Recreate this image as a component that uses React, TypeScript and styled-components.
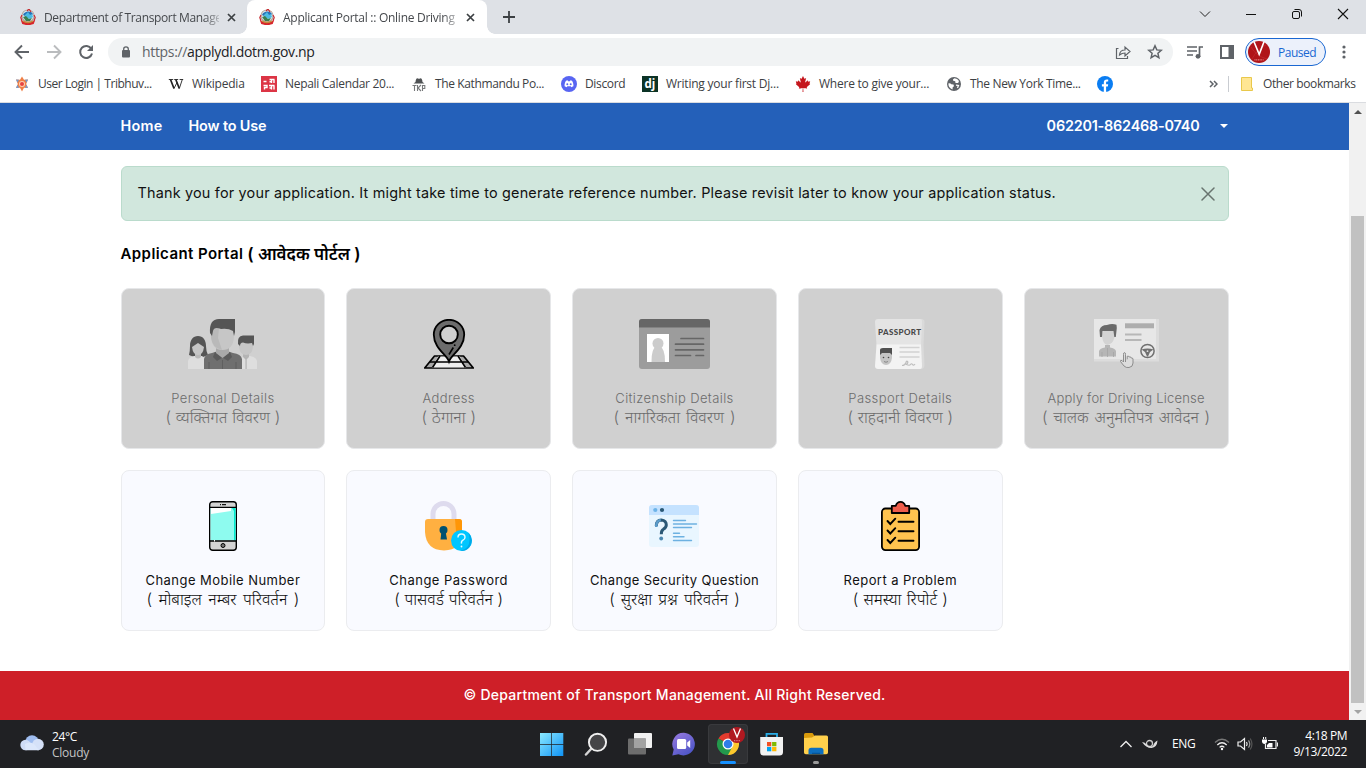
import React from "react";
import styled, { createGlobalStyle } from "styled-components";
import { FaCanadianMapleLeaf } from "react-icons/fa";

const ui = `"Segoe UI", "Open Sans", "Noto Sans", sans-serif`;
const web = `Inter, "Noto Sans", "Noto Sans Devanagari", sans-serif`;

const GlobalStyle = createGlobalStyle`
  * { box-sizing: border-box; }
  body { margin: 0; background: #fff; overflow: hidden; }
  svg { display: block; flex: none; }
`;

const Screen = styled.div`
  width: 1366px;
  height: 768px;
  display: flex;
  flex-direction: column;
  overflow: hidden;
`;

/* Text with its tracking and word gap in px */
const Txt = styled.span<{ $ls?: number; $size?: number; $ws?: number }>`
  white-space: nowrap;
  letter-spacing: ${(p) => p.$ls ?? 0}px;
  word-spacing: ${(p) => p.$ws ?? 0}px;
  ${(p) => (p.$size ? `font-size: ${p.$size}px;` : "")}
`;

/* ---------- Browser chrome ---------- */
const TabStrip = styled.div`
  height: 34px;
  flex: none;
  display: flex;
  background: #dee1e6;
  font: 12px ${ui};
  color: #45484c;
`;
const Tab = styled.div<{ $active?: boolean }>`
  position: relative;
  width: ${(p) => (p.$active ? 240 : 247)}px;
  padding-left: ${(p) => (p.$active ? 12 : 20)}px;
  display: flex;
  align-items: center;
  background: ${(p) => (p.$active ? "#fff" : "transparent")};
  border-radius: 8px 8px 0 0;
  &::before, &::after {
    content: "";
    display: ${(p) => (p.$active ? "block" : "none")};
    position: absolute;
    bottom: 0;
    width: 8px;
    height: 8px;
  }
  &::before { left: -8px; background: radial-gradient(circle at 0 0, transparent 7.5px, #fff 8px); }
  &::after { right: -8px; background: radial-gradient(circle at 100% 0, transparent 7.5px, #fff 8px); }
`;
const TabTitle = styled.div`
  width: 175px;
  margin-left: 8px;
  white-space: nowrap;
  mask-image: linear-gradient(90deg, #000 160px, rgba(0, 0, 0, 0.25) 175px);
`;
const TabClose = styled.div`
  margin-left: 8px;
`;
const NewTab = styled.div`
  padding: 11px 0 0 16px;
`;
const WindowButtons = styled.div`
  margin-left: auto;
  display: flex;
  gap: 34px;
  padding: 8px 17px 0 0;
`;
const Toolbar = styled.div`
  height: 36px;
  flex: none;
  display: flex;
  align-items: center;
  padding-left: 14px;
  background: #fff;
`;
const NavIcons = styled.div`
  width: 94px;
  display: flex;
  gap: 16px;
`;
const AddressBar = styled.div`
  width: 1065px;
  height: 28px;
  border-radius: 14px;
  background: #f1f3f4;
  display: flex;
  align-items: center;
  padding: 0 10px 0 12px;
  font: 14px ${ui};
  color: #202124;
`;
const Url = styled.div`
  margin-left: 10px;
  flex: 1;
  line-height: 20px;
  & i { font-style: normal; color: #5f6368; }
`;
const AddressIcons = styled.div`
  display: flex;
  gap: 16px;
`;
const ToolIcons = styled.div`
  display: flex;
  align-items: center;
  gap: 16px;
  margin-left: 14px;
`;
const Profile = styled.div`
  width: 81px;
  height: 28px;
  margin-left: 10px;
  border: 1px solid #1967d2;
  border-radius: 14px;
  background: #ecf1fb;
  display: flex;
  align-items: center;
  padding-left: 2px;
  gap: 8px;
  font: 12px ${ui};
  color: #1967d2;
`;
const Menu = styled.div`
  margin-left: 16px;
`;
const Bookmarks = styled.div`
  height: 33px;
  flex: none;
  display: flex;
  align-items: center;
  padding: 0 0 5px 14px;
  background: #fff;
  border-bottom: 1px solid #dadce0;
  font: 12px ${ui};
  color: #3c4043;
`;
const Bookmark = styled.div<{ $w: number }>`
  width: ${(p) => p.$w}px;
  display: flex;
  align-items: center;
  gap: 8px;
`;
const Other = styled.div`
  margin-left: auto;
  display: flex;
  align-items: center;
`;
const Divider = styled.div`
  width: 1px;
  height: 16px;
  margin: 0 11px 0 10px;
  background: #c9ccd1;
`;

/* ---------- Web page ---------- */
const Viewport = styled.div`
  height: 617px;
  flex: none;
  display: flex;
`;
const Page = styled.div`
  width: 1349px;
  display: flex;
  flex-direction: column;
  background: #fff;
  font-family: ${web};
  color: #111;
`;
const Container = styled.div`
  width: 1108px;
  margin: 0 auto;
`;
const NavBar = styled.div`
  height: 47px;
  flex: none;
  background: #2460b9;
  color: #fff;
  font-size: 14.4px;
  font-weight: 600;
`;
const NavRow = styled(Container)`
  height: 47px;
  display: flex;
  align-items: center;
  padding-bottom: 2px;
`;
const NavLink = styled.div<{ $w: number }>`
  width: ${(p) => p.$w}px;
`;
const Account = styled.div`
  margin-left: auto;
  display: flex;
  align-items: center;
  gap: 20px;
  padding-right: 1px;
`;
const Caret = styled.div`
  border: 4px solid transparent;
  border-top-color: #fff;
  border-bottom: 0;
`;
const Alert = styled.div`
  height: 55px;
  margin-top: 16px;
  padding: 0 13px 0 16px;
  display: flex;
  align-items: center;
  justify-content: space-between;
  background: #d1e7dd;
  border: 1px solid #badbcc;
  border-radius: 6px;
  font-size: 14.4px;
  & ${Txt} { padding-bottom: 2px; }
`;
const Heading = styled.div`
  height: 24px;
  margin-top: 20px;
  margin-bottom: 1px;
  display: flex;
  align-items: center;
  gap: 4px;
  font-size: 15px;
  font-weight: 600;
  color: #000;
`;
const Grid = styled.div`
  margin-top: 23px;
  display: grid;
  grid-template-columns: repeat(5, 1fr);
  grid-auto-rows: 161px;
  gap: 21px;
`;
const Card = styled.div<{ $off?: boolean }>`
  display: flex;
  flex-direction: column;
  align-items: center;
  padding-top: 29.5px;
  border: 1px solid ${(p) => (p.$off ? "#e6e7e9" : "#ebecef")};
  border-radius: 8px;
  background: ${(p) => (p.$off ? "#d0d0d0" : "#f9faff")};
  color: ${(p) => (p.$off ? "#6c6c6c" : "#111")};
  font-size: 13px;
  font-weight: ${(p) => (p.$off ? 350 : 400)};
`;
const CardName = styled.div`
  margin-top: 20px;
  height: 19px;
  line-height: 19px;
`;
const CardSub = styled.div`
  height: 18px;
  line-height: 18px;
  font-weight: 300;
`;
const Footer = styled.div`
  height: 49px;
  margin-top: auto;
  padding-bottom: 2px;
  flex: none;
  background: #ce1f28;
  color: #fff;
  display: flex;
  align-items: center;
  justify-content: center;
  font-size: 14px;
  font-weight: 500;
`;
const ScrollBar = styled.div`
  width: 17px;
  background: #f1f1f1;
  display: flex;
  flex-direction: column;
  align-items: center;
`;
const ScrollArrow = styled.div<{ $down?: boolean }>`
  height: 17px;
  display: flex;
  align-items: center;
  color: ${(p) => (p.$down ? "#a3a3a3" : "#505050")};
`;
const ScrollThumb = styled.div`
  width: 13px;
  height: 487px;
  margin-top: 96px;
  background: #c1c1c1;
`;

/* ---------- Taskbar ---------- */
const Taskbar = styled.div`
  height: 48px;
  flex: none;
  display: flex;
  justify-content: space-between;
  background: #202124;
  color: #fff;
  font: 12px/16px ${ui};
`;
const Weather = styled.div`
  width: 532px;
  display: flex;
  align-items: center;
  padding-left: 20px;
  gap: 8px;
`;
const WeatherText = styled.div`
  padding-top: 2px;
  & div:last-child { color: #c4c4c4; }
`;
const Apps = styled.div`
  flex: 1;
  display: flex;
`;
const AppSlot = styled.div<{ $active?: boolean }>`
  width: 40px;
  height: 40px;
  margin: 4px 4px 0 0;
  display: flex;
  flex-direction: column;
  align-items: center;
  padding-top: 8px;
  border-radius: 4px;
  background: ${(p) => (p.$active ? "#2f3033" : "transparent")};
  box-shadow: ${(p) => (p.$active ? "inset 0 0 0 1px #393a3d" : "none")};
`;
const RunMark = styled.div<{ $active?: boolean }>`
  width: ${(p) => (p.$active ? 16 : 6)}px;
  height: 3px;
  margin-top: 5px;
  border-radius: 2px;
  background: ${(p) => (p.$active ? "#1590ff" : "#9a9a9a")};
`;
const Tray = styled.div`
  display: flex;
  align-items: center;
  padding-right: 19px;
`;
const TrayItem = styled.div<{ $w: number }>`
  width: ${(p) => p.$w}px;
`;
const Clock = styled.div`
  width: 65px;
  text-align: right;
`;

/* ---------- Small icons ---------- */
const Crest = () => (
  <svg width="16" height="16" viewBox="0 0 16 16">
    <circle cx="8" cy="7" r="6.6" fill="#b5a79d" />
    <circle cx="8" cy="6.7" r="5.5" fill="#dde9ee" />
    <path d="M3 6c1-4 8-5 10-1l-2 2-3-2-3 2z" fill="#2773b7" />
    <path d="M5 6l3-3 2 3 2-1 1 3-3 2-5-2z" fill="#4cbbe4" />
    <path d="M3 8l3-1 3 3 3-1-2 3H6z" fill="#39804e" />
    <path d="M7 2l2-2 2 3M2 6L.8 8.5 2 12M14 6l1.2 2.5L14 12" fill="none" stroke="#c62c32" strokeWidth="1.2" />
    <path d="M.8 11q7 5 14.4 0l-1.5 4Q8 17.3 2.2 15z" fill="#d7262b" />
    <path d="M3 12q5 3 10 0" fill="none" stroke="#c48a3a" strokeWidth="1.4" />
  </svg>
);
const CloseIcon = () => (
  <svg width="9" height="9" viewBox="0 0 9 9">
    <path d="M1 1l7 7M8 1L1 8" stroke="#3c4043" strokeWidth="1.7" />
  </svg>
);
const Avatar = () => (
  <svg width="22" height="22" viewBox="0 0 22 22">
    <circle cx="11" cy="11" r="11" fill="#b01419" />
    <path d="M3 6q5 9 16 12M18 4Q9 8 4 18" stroke="#c5343a" fill="none" opacity=".5" />
    <path d="M6 .8l5.200 12.500L16 .8" fill="none" stroke="#fff" strokeWidth="1.600" />
    <path d="M6.500 18.800h9" stroke="#e78a8d" strokeWidth="1.300" strokeDasharray="1 .7" />
  </svg>
);

const favicons: Record<string, React.ReactNode> = {
  user: (
    <svg width="16" height="16" viewBox="0 0 16 16">
      <path d="M8 .5l2 3.3 4-.3-1.8 4.5 1.8 4-4-.2-2 3.7-2-3.7-4 .2 1.8-4L2 3.500l4 .3z" fill="#f07f45" />
      <path d="M2 3.500l3 .2-1.500 3zM14 12l-3-.2 1.500-3zM2 12l3-.2-1.500-3zM14 3.500l-3 .2 1.500 3z" fill="#6f9bd1" />
      <circle cx="8" cy="8" r="3" fill="#fbd0b4" />
      <circle cx="8" cy="8" r="2" fill="#e8433f" />
    </svg>
  ),
  wiki: (
    <svg width="16" height="16" viewBox="0 0 16 16">
      <path d="M.8 3.500h4.400M6.200 3.500h4M11.600 3.500h3.600" stroke="#222" strokeWidth=".9" />
      <path d="M2.500 3.500L6 12.500M7.800 3.500l3.500 9" stroke="#222" strokeWidth="1.700" />
      <path d="M6 12.500l3-6M11.300 12.500l3-9" stroke="#222" strokeWidth=".9" />
    </svg>
  ),
  calendar: (
    <svg width="16" height="16" viewBox="0 0 16 16">
      <rect width="16" height="16" fill="#dc3545" />
      <path d="M2.500 5.500h3M8.500 3.500h5M10.500 3.500V7M13 3.500V7M8.500 5.700h2M2.500 9.500h3.500v2H3.500v2M8 9.500h5.500M10.500 9.500v4M13 9.500v4M8.500 12h2" stroke="#fff" strokeWidth="1.400" fill="none" />
    </svg>
  ),
  post: (
    <svg width="16" height="16" viewBox="0 0 16 16">
      <path d="M4.500 6Q5 1.500 7 2.500q1 .6 2 0 2-1 2.500 3.500l2 1.500h-11z" fill="#4f5254" />
      <path d="M1.500 9.500h4M3.500 9.500V15M6.500 9v6M10 9l-3 3 3 3M11.500 15V9.500h2.300v3h-2" stroke="#77797b" strokeWidth="1.100" fill="none" />
    </svg>
  ),
  discord: (
    <svg width="16" height="16" viewBox="0 0 16 16">
      <circle cx="8" cy="8" r="8" fill="#5865f2" />
      <path d="M5 4.800L6.600 4.300l.5.900h1.800l.5-.9 1.600.5c1.100 1.700 1.600 3.500 1.400 5.400l-2.100 1.100-.6-1.100H6.300l-.6 1.100-2.100-1.100c-.2-1.900.3-3.700 1.400-5.400z" fill="#fff" />
      <circle cx="6.300" cy="8.200" r="1" fill="#5865f2" />
      <circle cx="9.700" cy="8.200" r="1" fill="#5865f2" />
    </svg>
  ),
  django: (
    <svg width="16" height="16" viewBox="0 0 16 16">
      <rect width="16" height="16" fill="#0c3326" />
      <text x="8" y="12" textAnchor="middle" fontFamily="Open Sans, sans-serif" fontSize="11.500" fontWeight="700" fill="#fff">dj</text>
    </svg>
  ),
  maple: <FaCanadianMapleLeaf size={16} color="#c5161d" />,
  globe: (
    <svg width="16" height="16" viewBox="0 0 16 16">
      <circle cx="8" cy="8" r="7" fill="#5f6368" />
      <path d="M2.300 7.500q2-.5 3 .8l2.200.3.500 1.700-1.300 1-.2 2.300Q2.500 12 2.300 7.500z" fill="#fff" />
      <path d="M8.500 2.300q-2.300 1-1.300 2.400l2 .6.300 1.700h2.700l.8-2Q11.500 2.600 8.500 2.300z" fill="#fff" />
      <path d="M10 9.200l2.500.3-1 2.500" fill="none" stroke="#fff" strokeWidth="1.200" />
    </svg>
  ),
  facebook: (
    <svg width="16" height="16" viewBox="0 0 16 16">
      <circle cx="8" cy="8" r="8" fill="#0a7df2" />
      <path d="M6.800 16v-5.400H4.900V8.300h1.900V6.600c0-2 1.100-3.100 3-3.100.7 0 1.400.1 1.400.1v2h-.9c-.9 0-1.200.5-1.200 1.200v1.500h2.100l-.4 2.300H9.100V16z" fill="#fff" />
    </svg>
  ),
};

const bookmarks: { icon: string; label: string; w: number; ls: number }[] = [
  { icon: "user", label: "User Login | Tribhuv...", w: 154, ls: -0.47 },
  { icon: "wiki", label: "Wikipedia", w: 93, ls: -0.22 },
  { icon: "calendar", label: "Nepali Calendar 20...", w: 150, ls: -0.3 },
  { icon: "post", label: "The Kathmandu Po...", w: 150, ls: -0.38 },
  { icon: "discord", label: "Discord", w: 81, ls: -0.35 },
  { icon: "django", label: "Writing your first Dj...", w: 153, ls: -0.22 },
  { icon: "maple", label: "Where to give your...", w: 151, ls: -0.23 },
  { icon: "globe", label: "The New York Time...", w: 151, ls: -0.33 },
  { icon: "facebook", label: "", w: 16, ls: 0 },
];

/* ---------- Card pictures ---------- */
const People = () => (
  <svg width="69" height="50" viewBox="0 0 69 50">
    <path d="M1 36Q2 32 2 27c0-6 3-10 8-10s8 4 8 10q0 5 2 9l-5 2H6z" fill="#555" />
    <path d="M0 50V42q1-4 6-5h8l4 3v10z" fill="#dedede" />
    <path d="M7 32h6v6q-3 3-6 0z" fill="#b9b9b9" />
    <path d="M4 28l6-4 6 4q-1 8-6 8t-6-8z" fill="#c6c6c6" />
    <path d="M52 50V40l4-3h6q6 1 7 5v8z" fill="#dedede" />
    <path d="M55 33h6v5l-3 3-3-3z" fill="#b4b4b4" />
    <path d="M57.300 40h1.600v10h-1.600z" fill="#bdbdbd" />
    <path d="M51 23h14v5q-1 8-7 8t-7-8z" fill="#c6c6c6" />
    <path d="M50 25q-1-8 5-8.500h11V25l-1 2-1-3q-5 1-9-.5-3 0-3 3.500z" fill="#555" />
    <path d="M16 50V40q1-5 8-6l6-2h9l6 2q8 1 9 6v10z" fill="#6f6f6f" />
    <path d="M27 33l7.500 6 7.500-6 2 5-4 4-5.500-3.500L29 42l-4-4z" fill="#5b5b5b" />
    <path d="M21 43v7M48 43v7M34.500 41v9" stroke="#5f5f5f" />
    <path d="M28 27h13v7l-6.500 5-6.500-5z" fill="#a9a9a9" />
    <path d="M23 10h23v8q-1 13-11.500 13T23 18z" fill="#c6c6c6" />
    <path d="M23 9h8l-1 10 4 12Q24 29 23 18z" fill="#b9b9b9" />
    <path d="M22 14Q21 0 31 0h16v13l-1 4-1-5q-5-3-12-2-7-3-8 2l-1 5z" fill="#555" />
  </svg>
);
const MapPin = () => (
  <svg width="50" height="50" viewBox="0 0 50 50">
    <path d="M10.500 37h29L49.300 49H.7z" fill="#a8a8a8" stroke="#000" strokeWidth="1.700" strokeLinejoin="round" />
    <path d="M14 37.500h22L42 48.500H8z" fill="#eee" />
    <path d="M6 43h38M16 37L8.500 48.500M34 37l7.500 11.500" fill="none" stroke="#000" strokeWidth="1.600" />
    <path d="M25 42.500C23 36 9.800 29 9.800 15.700a15.200 14.900 0 0 1 30.400 0C40.200 29 27 36 25 42.500z" fill="#6c6c6c" stroke="#000" strokeWidth="1.800" />
    <circle cx="25" cy="15.500" r="8.800" fill="#d0d0d0" stroke="#000" strokeWidth="1.900" />
    <path d="M25 35.500l4.300-7" stroke="#000" strokeWidth="1.600" />
    <circle cx="30.700" cy="26.200" r=".9" />
  </svg>
);
const Citizenship = () => (
  <svg width="71" height="50" viewBox="0 0 71 50">
    <rect width="71" height="50" rx="3" fill="#9c9c9c" />
    <path d="M0 8V3q0-3 3-3h65q3 0 3 3v5z" fill="#666" />
    <path d="M0 8.500h71" stroke="#828282" />
    <rect x="8" y="15" width="22" height="28" fill="#fff" />
    <circle cx="19" cy="24.500" r="5.500" fill="#ccc" />
    <path d="M12.500 43q0-14 4.500-15h4q5 1 5 15z" fill="#ccc" />
    <path d="M42 19.500h22.500M36.500 25.200h28M36.500 30.800h28M36.500 36.500h15M57 36.500h7.500" stroke="#666" strokeWidth="1.700" strokeLinecap="round" />
  </svg>
);
const Passport = () => (
  <svg width="50" height="50" viewBox="0 0 50 50">
    <path d="M40 0h6q4 0 3.500 4l-1 22 1 20q0 4-4 4H40z" fill="#dadada" />
    <path d="M3 0h42q2 0 2 3l-1 23H1.500L0 3q0-3 3-3z" fill="#e4e4e4" />
    <path d="M1.500 25.500H46L47 47q0 3-2 3H3q-3 0-3-3z" fill="#f3f3f3" />
    <text x="3" y="15.500" textLength="43" fontFamily="Lato, sans-serif" fontSize="8" fontWeight="900" fill="#484848">PASSPORT</text>
    <path d="M5 34h12v5q-1 7-6 7t-6-7z" fill="#c4c4c4" />
    <path d="M5 36V31q0-2 3-2h9v7l-2-2H7z" fill="#505050" />
    <circle cx="8.500" cy="38.500" r=".8" fill="#444" /><circle cx="13.500" cy="38.500" r=".8" fill="#444" />
    <path d="M9 42.500q2 1.500 4 0" fill="none" stroke="#888" />
    <path d="M24.500 28.500h20M24.500 33h20M24.500 38h20" stroke="#d2d2d2" strokeWidth="1.500" />
    <path d="M27 46.500q3 0 4-3 .5-2 1.500-1t-1 3q3 1.500 4 0t2 0 2.500-.5" fill="none" stroke="#bdbdbd" strokeWidth="1.200" />
  </svg>
);
const License = () => (
  <svg width="65" height="50" viewBox="0 0 65 50">
    <rect width="65" height="42.500" fill="#dcdcdc" />
    <rect width="62" height="40" fill="#e7e7e7" />
    <path d="M8 15l2-4h10l1 5q-1 7-5 9l-2.500 1-2.500-1q-3-3-3-10z" fill="#d3d3d3" />
    <path d="M6 18l-.5-7Q7 6 13 6q5-2 9.500-.3l.3 3.300-1 9h-1.500l-.8-6H8.500L8 18z" fill="#6a6a6a" />
    <path d="M5 37.500V32q1-3 6-3.500V26h5v2.500q5 .5 6 3.500v5.500z" fill="#b6b6b6" />
    <path d="M13.500 29v9M8 33v5M19.500 33v5" stroke="#a5a5a5" strokeWidth=".8" />
    <path d="M31 4.300h29v5H31z" fill="#adadad" />
    <path d="M31 15.500h16.500M31 21h16.500" stroke="#b7b7b7" strokeWidth="2" />
    <circle cx="53.500" cy="32" r="6.600" fill="none" stroke="#707070" strokeWidth="1.500" />
    <path d="M47.500 30.500q6-2 12 0l-3.500 2.500-2 4.500h-1l-2-4.500z" fill="#707070" />
    <circle cx="53.500" cy="32.200" r=".9" fill="#ddd" />
    <path d="M31.500 43V35.500q0-2-1-2t-1 2V43l-1.500-1.500q-2-.5-1.500 1l3.500 4.500q2 2 5 1.500 4-.5 4-4.500v-4q-.3-1.500-1.800-1-.5-1.800-2-1-.6-1.500-2-.7v3" fill="#dcdcdc" stroke="#858585" strokeWidth=".9" />
  </svg>
);
const Phone = () => (
  <svg width="28" height="50" viewBox="0 0 28 50">
    <rect x=".7" y=".7" width="26.600" height="48.600" rx="3" fill="#d3d3d3" stroke="#000" strokeWidth="1.400" />
    <rect x="1.500" y="6.500" width="25" height="33" fill="#8efbef" />
    <path d="M2 7h20v3L2 13z" fill="#fff" />
    <path d="M23 7h3.500v32.500H25V10z" fill="#00edcf" />
    <path d="M1 6.300h26M1 40h26" stroke="#000" strokeWidth="1.300" />
    <path d="M11 3.700h1M13 3.700h4" stroke="#111" strokeWidth="1.200" />
    <circle cx="14" cy="44.500" r="2" fill="#777" stroke="#000" />
    <path d="M5.500 39v1.500" stroke="#fff" />
  </svg>
);
const Lock = () => (
  <svg width="47" height="50" viewBox="0 0 47 50">
    <path d="M8 20V13a10.500 10.500 0 0 1 21 0v7" fill="none" stroke="#dedbee" strokeWidth="5" />
    <path d="M3 18h31q3 0 3 3v10q0 18-18 18.500Q1 49 0 31V21q0-3 3-3z" fill="#ffb041" />
    <path d="M30 18h4q3 0 3 3v10q0 6-5 12z" fill="#ff9607" />
    <circle cx="18.500" cy="29" r="4" fill="#005170" />
    <path d="M16.500 30h4l1.500 8.500h-6.500z" fill="#005170" />
    <circle cx="36.500" cy="39.500" r="10.500" fill="#00c6ff" />
    <path d="M43.500 32a10.500 10.500 0 0 1-8 18q12-3 8-18z" fill="#00a9e8" />
    <path d="M33 36.500q0-3.500 3.500-3.500t3.500 3.200q0 2-2 3t-1.500 3.500" fill="none" stroke="#e8faff" strokeWidth="1.400" />
    <circle cx="36.500" cy="45.500" r=".9" fill="#e8faff" />
  </svg>
);
const Security = () => (
  <svg width="50" height="50" viewBox="0 0 50 50">
    <rect y="4" width="50" height="42" rx="3" fill="#e9f6ff" />
    <path d="M0 14V7q0-3 3-3h44q3 0 3 3v7z" fill="#c5e2ff" />
    <circle cx="6.300" cy="9" r="2.100" fill="#6db3e8" />
    <circle cx="13" cy="9" r="2.100" fill="#2b5876" />
    <path d="M7.300 25q0-6 5-6 5 .5 5 5 0 2.500-3 4.300-2 1-2 5" fill="none" stroke="#2b5876" strokeWidth="3" />
    <path d="M7.300 26v-1.500q.3-5 4.500-5.500" fill="none" stroke="#5b9bc9" strokeWidth="2.600" />
    <circle cx="12.200" cy="37.500" r="1.900" fill="#4d88b0" />
    <path d="M24.500 19.500h12M24.500 23h23M24.500 26.500h18M24.500 32.300h6M24.500 35.700h10.500M24.500 39.500h18" stroke="#6db1e1" strokeWidth="1.400" strokeLinecap="round" />
  </svg>
);
const Clipboard = () => (
  <svg width="39" height="50" viewBox="0 0 39 50">
    <rect x=".9" y="7.500" width="37.200" height="41.600" rx="3.500" fill="#ffc34f" stroke="#000" strokeWidth="1.800" />
    <path d="M10.800 12V4.800h4Q16 .9 19.500.9t4.700 3.900h4V12z" fill="#ee5d4c" stroke="#000" strokeWidth="1.800" strokeLinejoin="round" />
    <path d="M17.500 20.800h15M17.500 30.200h15M17.500 39.800h15M6.500 20l2.800 3 5-5.300M6.500 29.500l2.800 3 5-5.300M6.500 39l2.800 3 5-5.300" fill="none" stroke="#000" strokeWidth="1.900" strokeLinecap="round" />
  </svg>
);

type CardData = { art: React.ReactNode; name: string; sub: string; off?: boolean; ls: number; ws: number };
const cards: CardData[] = [
  { art: <People />, name: "Personal Details", sub: "( व्यक्तिगत विवरण )", off: true, ls: 0.4, ws: 0.2 },
  { art: <MapPin />, name: "Address", sub: "( ठेगाना )", off: true, ls: 0.4, ws: 0.4 },
  { art: <Citizenship />, name: "Citizenship Details", sub: "( नागरिकता विवरण )", off: true, ls: 0.38, ws: 1.5 },
  { art: <Passport />, name: "Passport Details", sub: "( राहदानी विवरण )", off: true, ls: 0.4, ws: 0.2 },
  { art: <License />, name: "Apply for Driving License", sub: "( चालक अनुमतिपत्र आवेदन )", off: true, ls: 0.2, ws: 1.2 },
  { art: <Phone />, name: "Change Mobile Number", sub: "( मोबाइल नम्बर परिवर्तन )", ls: 0.45, ws: 2 },
  { art: <Lock />, name: "Change Password", sub: "( पासवर्ड परिवर्तन )", ls: 0.48, ws: 0.2 },
  { art: <Security />, name: "Change Security Question", sub: "( सुरक्षा प्रश्न परिवर्तन )", ls: 0.34, ws: 1.6 },
  { art: <Clipboard />, name: "Report a Problem", sub: "( समस्या रिपोर्ट )", ls: 0.44, ws: 0.7 },
];

/* ---------- Taskbar icons ---------- */
const WindowsLogo = () => (
  <svg width="24" height="24" viewBox="0 0 24 24">
    <defs>
      <linearGradient id="win" x2="1" y2="1"><stop stopColor="#8be9ff" /><stop offset="1" stopColor="#0f93f5" /></linearGradient>
    </defs>
    <path d="M0 1h11.300v11H0zM12 1h11.300v11H12zM0 12.700h11.300V24H0zM12 12.700h11.300V24H12z" fill="url(#win)" />
  </svg>
);
const SearchIcon = () => (
  <svg width="24" height="24" viewBox="0 0 24 24">
    <path d="M2 22.500l6-6.500" stroke="#d5d5d5" strokeWidth="2.500" strokeLinecap="round" />
    <circle cx="13.500" cy="10.300" r="8.600" fill="#454547" stroke="#efefef" strokeWidth="1.900" />
  </svg>
);
const TaskView = () => (
  <svg width="24" height="24" viewBox="0 0 24 24">
    <rect x="6" y="1" width="18" height="15" rx="1" fill="#f1f1f1" />
    <rect x="0" y="6.500" width="18" height="16" rx="1" fill="#6d6d6d" />
    <path d="M6 6.500h12V16H6z" fill="#a2a2a2" />
  </svg>
);
const ChatIcon = () => (
  <svg width="24" height="24" viewBox="0 0 24 24">
    <defs>
      <linearGradient id="chat" x2=".7" y2="1"><stop stopColor="#9a7be0" /><stop offset="1" stopColor="#4c55c7" /></linearGradient>
    </defs>
    <path d="M12 .8A11.300 11.300 0 1 1 6.500 22.200L.3 23.500 1.700 17.500A11.300 11.300 0 0 1 12 .8z" fill="url(#chat)" />
    <rect x="5" y="7" width="9.200" height="10" rx="1.500" fill="#fff" />
    <path d="M15.200 10.500l3-2.500v8l-3-2.500z" fill="#fff" />
  </svg>
);
const ChromeIcon = () => (
  <svg width="40" height="24" viewBox="0 0 40 24" overflow="visible">
    <path d="M20 12L10.470 6.500A11 11 0 0 1 29.530 6.500z" fill="#e33b2e" />
    <path d="M20 12l9.530-5.500A11 11 0 0 1 20 23z" fill="#fdc92d" />
    <path d="M20 12l4.500 2.600L20 23A11 11 0 0 1 10.470 6.500z" fill="#23994c" />
    <circle cx="20" cy="12" r="5.500" fill="#fff" />
    <circle cx="20" cy="12" r="4.300" fill="#2f7de9" />
    <circle cx="29" cy="3" r="8" fill="#b01820" />
    <path d="M25.500-3.500L29 5l3.500-8.500" fill="none" stroke="#fff" strokeWidth="1.300" />
    <path d="M26 8.700h6" stroke="#e78a8d" strokeDasharray="1 .7" />
  </svg>
);
const StoreIcon = () => (
  <svg width="24" height="24" viewBox="0 0 24 24">
    <path d="M6.500 6V1.800H17V6" fill="none" stroke="#2aaee8" strokeWidth="1.800" />
    <path d="M.2 5h22.800v15q0 3.500-3.500 3.500H3.700Q.2 23.500.2 20z" fill="#f2f2f2" />
    <path d="M7 10h4.300v4.300H7z" fill="#f25022" />
    <path d="M12.100 10h4.300v4.300h-4.300z" fill="#7fba00" />
    <path d="M7 15h4.300v4.300H7z" fill="#00a4ef" />
    <path d="M12.100 15h4.300v4.300h-4.300z" fill="#ffb900" />
  </svg>
);
const FolderIcon = () => (
  <svg width="24" height="24" viewBox="0 0 24 24">
    <path d="M0 2.500q0-1.500 1.500-1.500h7L11 4.500l-3 3H0z" fill="#d99a0b" />
    <path d="M0 6l8-.5L11 3.500h11.500Q24 3.500 24 5V20.500q0 1.800-1.800 1.800H1.800Q0 22.300 0 20.500z" fill="#ffd04c" />
    <path d="M4.500 22.300V18.500q0-2.800 2.800-2.800h9.400q2.800 0 2.800 2.800v3.800z" fill="#0d6fc0" />
    <path d="M8 21.300h8" stroke="#064f8f" />
  </svg>
);

export default function App() {
  return (
    <Screen>
      <GlobalStyle />
      <TabStrip>
        <Tab>
          <Crest />
          <TabTitle><Txt $ls={-0.36}>Department of Transport Manage</Txt></TabTitle>
          <TabClose><CloseIcon /></TabClose>
        </Tab>
        <Tab $active>
          <Crest />
          <TabTitle><Txt $ls={-0.27}>Applicant Portal :: Online Driving</Txt></TabTitle>
          <TabClose><CloseIcon /></TabClose>
        </Tab>
        <NewTab>
          <svg width="12" height="12" viewBox="0 0 12 12"><path d="M6 0v12M0 6h12" stroke="#3c4043" strokeWidth="1.800" /></svg>
        </NewTab>
        <WindowButtons>
          <svg width="12" height="12" viewBox="0 0 12 12"><path d="M1 3.500l5 5 5-5" fill="none" stroke="#222" /></svg>
          <svg width="12" height="12" viewBox="0 0 12 12"><path d="M1 6.500h10" stroke="#111" /></svg>
          <svg width="12" height="12" viewBox="0 0 12 12" fill="none" stroke="#111"><rect x="1.500" y="3.500" width="7" height="7" rx="1.500" /><path d="M3.500 1.500H8q2.500 0 2.500 2.500v4.500" /></svg>
          <svg width="12" height="12" viewBox="0 0 12 12"><path d="M1 1l10 10M11 1L1 11" stroke="#111" strokeWidth="1.100" /></svg>
        </WindowButtons>
      </TabStrip>

      <Toolbar>
        <NavIcons>
          <svg width="16" height="16" viewBox="0 0 16 16"><path d="M15 8H2M8 1.500L1.500 8 8 14.500" fill="none" stroke="#5f6368" strokeWidth="1.900" /></svg>
          <svg width="16" height="16" viewBox="0 0 16 16"><path d="M1 8h13M8 1.500L14.500 8 8 14.500" fill="none" stroke="#babcbe" strokeWidth="1.900" /></svg>
          <svg width="16" height="16" viewBox="0 0 16 16"><path d="M13.300 4.800A6 6 0 1 0 14 9.500" fill="none" stroke="#5f6368" strokeWidth="2" /><path d="M15 1v6H9z" fill="#5f6368" /></svg>
        </NavIcons>
        <AddressBar>
          <svg width="12" height="12" viewBox="0 0 12 12"><rect x="2" y="4" width="8" height="7.500" rx="1" fill="#5f6368" /><path d="M3.700 5V3q0-2.200 2.300-2.200T8.300 3v2" fill="none" stroke="#5f6368" strokeWidth="1.300" /></svg>
          <Url><Txt $ls={-0.33}><i>https://</i>applydl.dotm.gov.np</Txt></Url>
          <AddressIcons>
            <svg width="16" height="16" viewBox="0 0 16 16" fill="none" stroke="#5f6368" strokeWidth="1.200"><path d="M3.500 4.500H1.500v10h11V12" /><path d="M4.500 11q.3-5 5.500-5V3l5 4.500-5 4.500V9q-3 0-5.500 2z" /></svg>
            <svg width="16" height="16" viewBox="0 0 16 16"><path d="M8 1.800l1.800 4.100 4.500.4-3.400 3 1 4.400L8 11.400l-3.900 2.300 1-4.400-3.400-3 4.500-.4z" fill="none" stroke="#5f6368" strokeWidth="1.500" /></svg>
          </AddressIcons>
        </AddressBar>
        <ToolIcons>
          <svg width="16" height="16" viewBox="0 0 16 16"><path d="M0 3h10M0 7h10M0 11h6M12.500 13V3H16" fill="none" stroke="#5f6368" strokeWidth="1.700" /><circle cx="11" cy="12.300" r="2.400" fill="#5f6368" /></svg>
          <svg width="16" height="16" viewBox="0 0 16 16"><rect x="2" y="2" width="12" height="12" fill="none" stroke="#5f6368" strokeWidth="2" /><path d="M9.500 2H14v12H9.500z" fill="#5f6368" /></svg>
        </ToolIcons>
        <Profile><Avatar /><Txt $ls={-0.5}>Paused</Txt></Profile>
        <Menu>
          <svg width="4" height="14" viewBox="0 0 4 14" fill="#5f6368"><circle cx="2" cy="2" r="1.600" /><circle cx="2" cy="7" r="1.600" /><circle cx="2" cy="12" r="1.600" /></svg>
        </Menu>
      </Toolbar>

      <Bookmarks>
        {bookmarks.map((b) => (
          <Bookmark key={b.icon} $w={b.w}>
            {favicons[b.icon]}
            <Txt $ls={b.ls}>{b.label}</Txt>
          </Bookmark>
        ))}
        <Other>
          <svg width="9" height="8" viewBox="0 0 9 8"><path d="M1 1l3 3-3 3M5 1l3 3-3 3" fill="none" stroke="#5f6368" strokeWidth="1.500" /></svg>
          <Divider />
          <Bookmark $w={126}>
            <svg width="15" height="16" viewBox="0 0 15 16"><path d="M1.500 1.500h10v10.500h1v2.500h-11z" fill="#ffe693" stroke="#e9c84b" /></svg>
            <Txt $ls={-0.4}>Other bookmarks</Txt>
          </Bookmark>
        </Other>
      </Bookmarks>

      <Viewport>
        <Page>
          <NavBar>
            <NavRow>
              <NavLink $w={68}><Txt $ls={0.3}>Home</Txt></NavLink>
              <NavLink $w={90}><Txt $ls={-0.15}>How to Use</Txt></NavLink>
              <Account><Txt $ls={-0.2}>062201-862468-0740</Txt><Caret /></Account>
            </NavRow>
          </NavBar>
          <Container>
            <Alert>
              <Txt $ls={0.2}>Thank you for your application. It might take time to generate reference number. Please revisit later to know your application status.</Txt>
              <svg width="14" height="14" viewBox="0 0 14 14"><path d="M1 1l12 12M13 1L1 13" stroke="#69746f" strokeWidth="1.500" strokeLinecap="round" /></svg>
            </Alert>
            <Heading><Txt $ls={0.42}>Applicant Portal</Txt><Txt $size={17}>( आवेदक पोर्टल )</Txt></Heading>
            <Grid>
              {cards.map((c) => (
                <Card key={c.name} $off={c.off}>
                  {c.art}
                  <CardName><Txt $ls={c.ls}>{c.name}</Txt></CardName>
                  <CardSub><Txt $size={16} $ws={c.ws}>{c.sub}</Txt></CardSub>
                </Card>
              ))}
            </Grid>
          </Container>
          <Footer><Txt $ls={0.25}>© Department of Transport Management. All Right Reserved.</Txt></Footer>
        </Page>
        <ScrollBar>
          <ScrollArrow><svg width="8" height="4" viewBox="0 0 8 4"><path d="M0 4l4-4 4 4z" fill="currentColor" /></svg></ScrollArrow>
          <ScrollThumb />
          <ScrollArrow $down><svg width="8" height="4" viewBox="0 0 8 4"><path d="M0 0l4 4 4-4z" fill="currentColor" /></svg></ScrollArrow>
        </ScrollBar>
      </Viewport>

      <Taskbar>
        <Weather>
          <svg width="24" height="18" viewBox="0 0 24 18">
            <circle cx="12" cy="7" r="6.800" fill="#9fbdf0" />
            <circle cx="5.500" cy="10" r="5.200" fill="#cfdcf6" />
            <circle cx="18" cy="9.500" r="5.800" fill="#d5e1f8" />
            <path d="M5 9q5-3 9 0l5 6.200H5.500z" fill="#dce7fb" />
          </svg>
          <WeatherText>
            <div><Txt $ls={-0.4}>24°C</Txt></div>
            <div><Txt $ls={-0.25}>Cloudy</Txt></div>
          </WeatherText>
        </Weather>
        <Apps>
          <AppSlot><WindowsLogo /></AppSlot>
          <AppSlot><SearchIcon /></AppSlot>
          <AppSlot><TaskView /></AppSlot>
          <AppSlot><ChatIcon /></AppSlot>
          <AppSlot $active><ChromeIcon /><RunMark $active /></AppSlot>
          <AppSlot><StoreIcon /></AppSlot>
          <AppSlot><FolderIcon /><RunMark /></AppSlot>
        </Apps>
        <Tray>
          <TrayItem $w={22}><svg width="12" height="12" viewBox="0 0 12 12"><path d="M.5 9L6 3.500 11.500 9" fill="none" stroke="#eee" strokeWidth="1.300" /></svg></TrayItem>
          <TrayItem $w={30}><svg width="16" height="12" viewBox="0 0 16 12"><circle cx="7.500" cy="5.500" r="3" fill="none" stroke="#ccc" strokeWidth="1.300" /><path d="M0 4q3 0 5 3t6 1q1-4 4.500-5.500-.5 7-6 7.500Q4 10 0 4z" fill="#ddd" /></svg></TrayItem>
          <TrayItem $w={42}><Txt $ls={-0.3}>ENG</Txt></TrayItem>
          <TrayItem $w={23}><svg width="16" height="14" viewBox="0 0 16 14" fill="none" strokeWidth="1.300"><path d="M1 5.500q7-6.500 14 0" stroke="#777" /><path d="M3.300 8q4.700-4.500 9.400 0M5.600 10.400q2.400-2.300 4.800 0" stroke="#eee" /><circle cx="8" cy="12" r="1.200" fill="#fff" /></svg></TrayItem>
          <TrayItem $w={25}><svg width="16" height="14" viewBox="0 0 16 14" fill="none" strokeWidth="1.200"><path d="M1 5h2.500L7.500 1.500v11L3.500 9H1z" stroke="#eee" /><path d="M9.500 5q1.300 2 0 4" stroke="#eee" /><path d="M11.500 3.300q2.500 3.700 0 7.400" stroke="#999" /><path d="M13.200 1.500q3.500 5.500 0 11" stroke="#555" /></svg></TrayItem>
          <TrayItem $w={20}><svg width="17" height="14" viewBox="0 0 17 14"><path d="M6 3.500h8v8H3.500V7" fill="none" stroke="#eee" strokeWidth="1.200" /><path d="M15.500 5.500v4" stroke="#eee" /><path d="M7 6h3.500v4.500H5V8z" fill="#fff" /><path d="M0 2.500h5v2.500Q4.500 7 2.500 7T0 5zM1 0h1v2H1zM3.200 0h1v2h-1z" fill="#fff" /></svg></TrayItem>
          <Clock>
            <Txt $ls={-0.45}>4:18 PM</Txt>
            <br />
            <Txt $ls={-0.38}>9/13/2022</Txt>
          </Clock>
        </Tray>
      </Taskbar>
    </Screen>
  );
}
